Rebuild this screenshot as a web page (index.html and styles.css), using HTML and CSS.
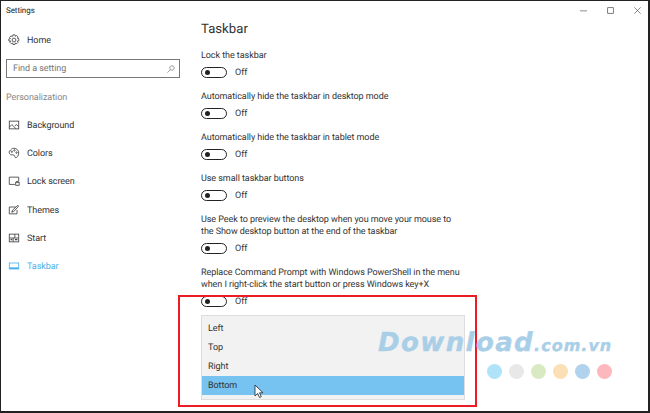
FILE: index.html
```html
<!DOCTYPE html>
<html lang="en">
<head>
  <meta charset="UTF-8">
  <meta name="viewport" content="width=device-width, initial-scale=1.0">
  <title>Settings</title>
  <link rel="stylesheet" href="styles.css">
</head>
<body>
  <div class="window">
    <div class="titlebar">
      <span class="app-name">Settings</span>
      <div class="win-btns">
        <svg class="win-btn" viewBox="0 0 10 10"><path d="M0 5.500h10" stroke="#777" stroke-width="1.200"/></svg>
        <svg class="win-btn" viewBox="0 0 10 10"><rect x="1" y="1" width="8" height="8" fill="none" stroke="#444" stroke-width="1"/></svg>
        <svg class="win-btn" viewBox="0 0 10 10"><path d="M.5.5l9 9M9.500.5l-9 9" stroke="#555" stroke-width="1"/></svg>
      </div>
    </div>

    <div class="content">
      <nav class="sidebar">
        <div class="nav-item home">
          <svg class="nav-icon" viewBox="0 0 14 14" fill="none" stroke="#444" stroke-width="1"><circle cx="7" cy="7" r="2.200"/><path d="M5.800 1h2.400l.4 1.700 1.500-.9 1.700 1.700-.9 1.500 1.700.4v2.400l-1.700.4.9 1.500-1.700 1.700-1.500-.9-.4 1.700H5.800l-.4-1.700-1.500.9-1.700-1.700.9-1.500L1 8.200V5.800l1.700-.4-.9-1.500 1.700-1.700 1.500.9z"/></svg>
          <span>Home</span>
        </div>
        <div class="search">
          <span>Find a setting</span>
          <svg class="search-icon" viewBox="0 0 10 10" fill="none" stroke="#888" stroke-width="1"><circle cx="6.200" cy="3.800" r="2.800"/><path d="M4.200 5.800L.5 9.500"/></svg>
        </div>
        <div class="section-title">Personalization</div>
        <div class="nav-list">
          <div class="nav-item">
            <svg class="nav-icon" viewBox="0 0 14 14" fill="none" stroke="#444" stroke-width="1"><rect x="1.500" y="2.500" width="11" height="9"/><path d="M1.500 9.500l3-3 5 5M8 8l2-1.500 2.500 2.500"/></svg>
            <span>Background</span>
          </div>
          <div class="nav-item">
            <svg class="nav-icon" viewBox="0 0 14 14" fill="none" stroke="#444" stroke-width="1"><path d="M7 1.500c3.200 0 5.500 2.400 5.500 5.500S10.500 12.500 9 12.500 8.500 10.500 7 9.500 3 10 2 8 1 5.500 3 3.500 5 1.500 7 1.500z"/><circle cx="4.500" cy="5.500" r=".8"/><circle cx="7.500" cy="4" r=".8"/><circle cx="10" cy="6.500" r=".8"/></svg>
            <span>Colors</span>
          </div>
          <div class="nav-item">
            <svg class="nav-icon" viewBox="0 0 14 14" fill="none" stroke="#444" stroke-width="1"><path d="M8 11H1.500V2.500h11V7"/><rect x="9" y="8.500" width="4" height="3.500"/><path d="M10 8.500V7.500h2v1"/></svg>
            <span>Lock screen</span>
          </div>
          <div class="nav-item">
            <svg class="nav-icon" viewBox="0 0 14 14" fill="none" stroke="#444" stroke-width="1"><path d="M9 3.500H1.500v8h9V7"/><path d="M4.500 9.500l.5-2 6.500-6 1 1-6 6.500z"/><path d="M5 9l1-1"/></svg>
            <span>Themes</span>
          </div>
          <div class="nav-item">
            <svg class="nav-icon" viewBox="0 0 14 14" fill="none" stroke="#444" stroke-width="1"><rect x="1.500" y="2.500" width="11" height="9"/><path d="M1.500 7h11M6 7v4.500M8 2.500V7"/><path d="M3 9h2M8 9h3" stroke-width="1.500"/></svg>
            <span>Start</span>
          </div>
          <div class="nav-item current">
            <svg class="nav-icon" viewBox="0 0 14 14" fill="none" stroke="#4db2ec" stroke-width="1"><rect x="1.500" y="3.500" width="11" height="7"/><path d="M1.500 9.500h11" stroke-width="2"/></svg>
            <span>Taskbar</span>
          </div>
        </div>
      </nav>

      <main class="main">
        <h1>Taskbar</h1>
        <div class="setting">
          <p>Lock the taskbar</p>
          <div class="toggle-row"><span class="toggle"></span><span>Off</span></div>
        </div>
        <div class="setting">
          <p>Automatically hide the taskbar in desktop mode</p>
          <div class="toggle-row"><span class="toggle"></span><span>Off</span></div>
        </div>
        <div class="setting">
          <p>Automatically hide the taskbar in tablet mode</p>
          <div class="toggle-row"><span class="toggle"></span><span>Off</span></div>
        </div>
        <div class="setting">
          <p>Use small taskbar buttons</p>
          <div class="toggle-row"><span class="toggle"></span><span>Off</span></div>
        </div>
        <div class="setting">
          <p>Use Peek to preview the desktop when you move your mouse to<br>the Show desktop button at the end of the taskbar</p>
          <div class="toggle-row"><span class="toggle"></span><span>Off</span></div>
        </div>
        <div class="setting">
          <p>Replace Command Prompt with Windows PowerShell in the menu<br>when I right-click the start button or press Windows key+X</p>
          <div class="toggle-row"><span class="toggle"></span><span>Off</span></div>
        </div>
        <div class="dropdown">
          <div class="option">Left</div>
          <div class="option">Top</div>
          <div class="option">Right</div>
          <div class="option selected">Bottom</div>
        </div>
      </main>
    </div>

    <!-- overlays on the screenshot -->
    <div class="red-box"></div>
    <svg class="cursor" viewBox="0 0 10 15"><path d="M1 1v11l2.700-2.500 1.800 4 1.800-.8-1.800-3.900H9z" fill="#fff" stroke="#222" stroke-width=".8"/></svg>
    <div class="watermark">
      <div class="wm-text"><span class="wm-big">Download</span><span class="wm-small">.com.vn</span></div>
      <div class="wm-dots">
        <span class="dot dot-1"></span>
        <span class="dot dot-2"></span>
        <span class="dot dot-3"></span>
        <span class="dot dot-4"></span>
        <span class="dot dot-5"></span>
        <span class="dot dot-6"></span>
      </div>
    </div>
  </div>
</body>
</html>
```

FILE: styles.css
```css
* {
  box-sizing: border-box;
}

html, body {
  margin: 0;
  padding: 0;
  overflow: hidden;
}

body {
  width: 650px;
  height: 413px;
  background: #222;
  font-family: Roboto, 'Noto Sans', sans-serif;
  font-size: 9px;
  letter-spacing: -0.06px;
  color: #333;
  text-rendering: geometricPrecision;
}

.window {
  position: relative;
  width: 647px;
  height: 410px;
  margin: 1px 0 0 1px;
  background: #fff;
  overflow: hidden;
}

.titlebar {
  display: flex;
  justify-content: space-between;
  align-items: center;
  height: 18px;
  padding-left: 5px;
}

.app-name {
  font-size: 8px;
  color: #222;
}

.win-btns {
  display: flex;
  gap: 20px;
  padding-right: 7px;
}

.win-btn {
  width: 7px;
  height: 7px;
}

.content {
  display: flex;
}

.sidebar {
  width: 200px;
  flex-shrink: 0;
  padding: 11px 0 0 5px;
}

.nav-item {
  display: flex;
  align-items: center;
  gap: 7px;
  height: 28.3px;
  padding-left: 2px;
}

.nav-item span {
  padding-top: 2px;
}

.nav-item.home {
  height: 20px;
}

.nav-item.current {
  color: #4db2ec;
}

.nav-icon {
  width: 12px;
  height: 12px;
  flex-shrink: 0;
}

.search {
  display: flex;
  justify-content: space-between;
  align-items: center;
  width: 174px;
  height: 19px;
  margin-top: 9px;
  padding: 0 4px 0 6px;
  border: 1px solid #777;
  color: #777;
}

.search-icon {
  width: 8px;
  height: 8px;
}

.section-title {
  margin-top: 13px;
  margin-bottom: 5.5px;
  color: #888;
  line-height: 14px;
}

.main {
  flex: 1;
  padding-top: 1px;
}

h1 {
  margin: 0 0 9px;
  font-size: 13.2px;
  font-weight: 400;
  letter-spacing: 0;
  line-height: 20px;
  color: #333;
}

.setting {
  margin-bottom: 10px;
}

.setting p {
  margin: 0 0 3px;
  padding-top: 1px;
  line-height: 12px;
}

.toggle-row {
  display: flex;
  align-items: center;
  gap: 8px;
  height: 15px;
}

.toggle {
  display: flex;
  align-items: center;
  width: 26px;
  height: 11px;
  padding-left: 3px;
  border: 1.5px solid #222;
  border-radius: 6px;
}

.toggle::before {
  content: "";
  width: 5px;
  height: 5px;
  border-radius: 50%;
  background: #222;
}

.dropdown {
  width: 264px;
  margin-top: -4px;
  padding: 3px 0 4px;
  background: #f2f2f2;
  border: 1px solid #ddd;
}

.option {
  height: 19px;
  padding-left: 6px;
  line-height: 21px;
}

.option.selected {
  background: #76c3f2;
}

.red-box {
  position: absolute;
  left: 177px;
  top: 294px;
  width: 299px;
  height: 112px;
  border: 2px solid #ed1c24;
}

.cursor {
  position: absolute;
  left: 253px;
  top: 383px;
  width: 10px;
  height: 15px;
}

.watermark {
  position: absolute;
  left: 377px;
  top: 328px;
  color: #a9cfe8;
}

.wm-text {
  display: flex;
  align-items: baseline;
  font-family: 'DejaVu Sans', sans-serif;
  font-style: italic;
  font-weight: 700;
  line-height: 28px;
  -webkit-text-stroke: 0.4px #a9cfe8;
}

.wm-big {
  font-size: 26px;
  letter-spacing: 1.4px;
}

.wm-small {
  font-size: 16px;
  letter-spacing: 1px;
}

.wm-dots {
  display: flex;
  gap: 7px;
  margin: 4px 0 0 109px;
}

.dot {
  width: 15px;
  height: 15px;
  border-radius: 50%;
}

.dot-1 { background: #aee3f9; }
.dot-2 { background: #e8e8e8; }
.dot-3 { background: #d9eac2; }
.dot-4 { background: #fbdfb5; }
.dot-5 { background: #b0d2ec; }
.dot-6 { background: #fdb8be; }
```
